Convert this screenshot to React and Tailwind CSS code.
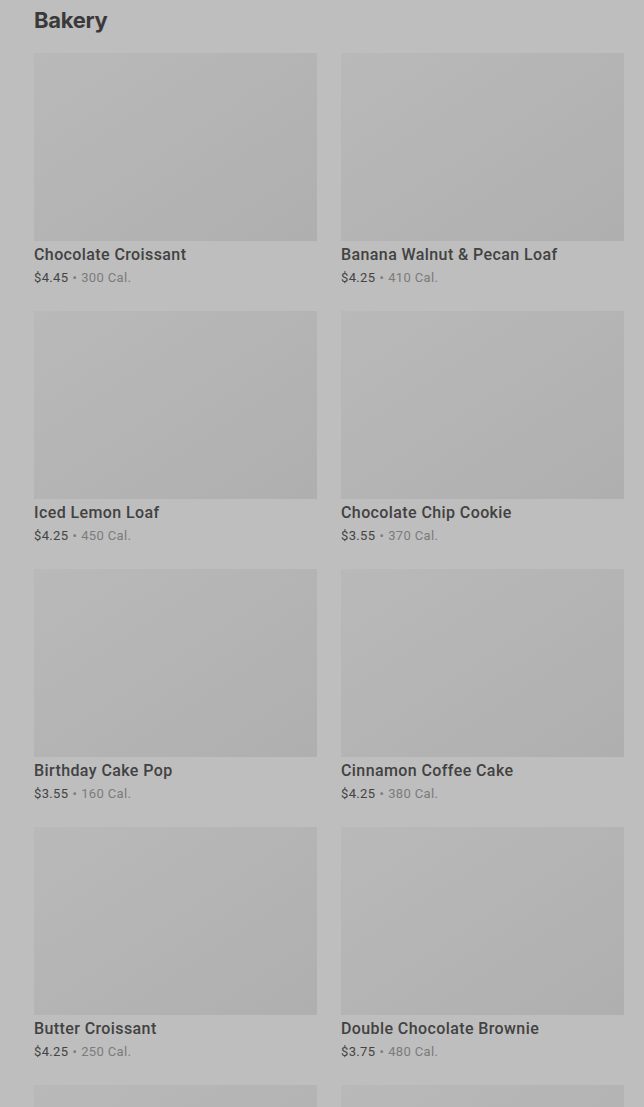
import React from 'react'

const items = [
  { name: 'Chocolate Croissant', price: '$4.45', cal: '300 Cal.' },
  { name: 'Banana Walnut & Pecan Loaf', price: '$4.25', cal: '410 Cal.' },
  { name: 'Iced Lemon Loaf', price: '$4.25', cal: '450 Cal.' },
  { name: 'Chocolate Chip Cookie', price: '$3.55', cal: '370 Cal.' },
  { name: 'Birthday Cake Pop', price: '$3.55', cal: '160 Cal.' },
  { name: 'Cinnamon Coffee Cake', price: '$4.25', cal: '380 Cal.' },
  { name: 'Butter Croissant', price: '$4.25', cal: '250 Cal.' },
  { name: 'Double Chocolate Brownie', price: '$3.75', cal: '480 Cal.' },
  { name: 'Plain Bagel', price: '$2.45', cal: '280 Cal.' },
  { name: 'Blueberry Muffin', price: '$3.25', cal: '360 Cal.' }
]

export default function App() {
  return (
    <div className="h-[1107px] overflow-hidden bg-[#bebebe] pl-[34px] pr-[20px] pt-[6px] font-['Roboto',sans-serif]">
      {/* 分类标题 */}
      <h2 className="text-[22px] leading-[28px] font-bold tracking-[-0.3px] text-[#3a3a3a] font-['Inter',sans-serif]">
        Bakery
      </h2>

      <div className="mt-[19px] grid grid-cols-2 gap-x-[24px] gap-y-[24px]">
        {items.map(item => (
          <MenuItem key={item.name} item={item} />
        ))}
      </div>
    </div>
  )
}

function MenuItem({ item }) {
  return (
    <div>
      <div className="h-[188px] bg-gradient-to-br from-[#b9b9b9] to-[#afafaf]"></div>
      <div className="mt-[3px] text-[16px] leading-[22px] font-medium tracking-[0.4px] text-[#424242]">
        {item.name}
      </div>
      <div className="mt-[3px] text-[13px] leading-[18px] tracking-[0.35px] text-[#7b7b7b]">
        <span className="text-[#444444]">{item.price}</span>
        <span className="mx-[4px]">•</span>
        {item.cal}
      </div>
    </div>
  )
}
